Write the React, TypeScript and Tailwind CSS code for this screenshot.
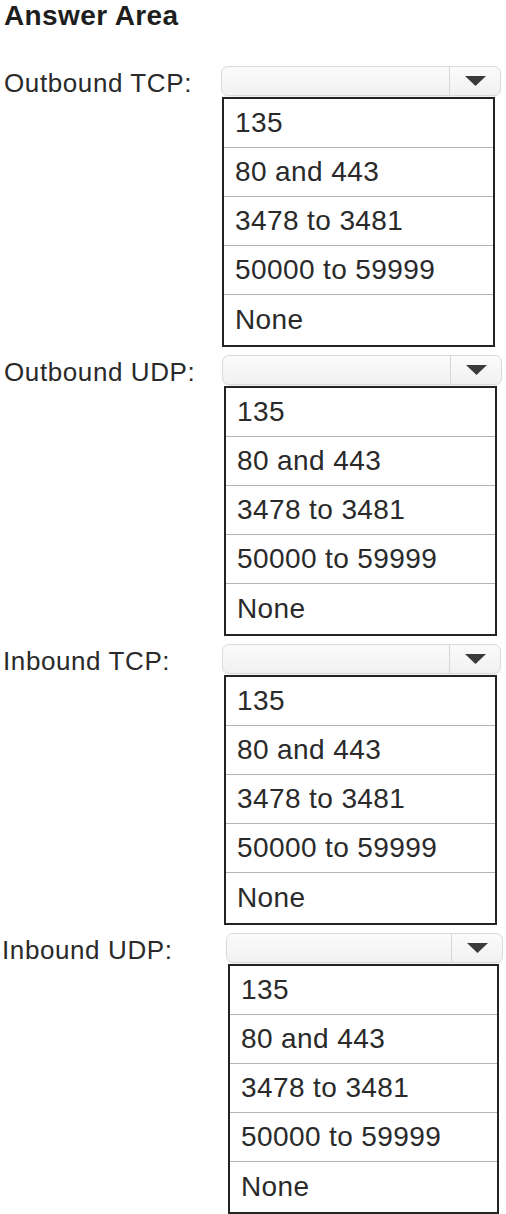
import React from "react";

const OPTIONS = ["135", "80 and 443", "3478 to 3481", "50000 to 59999", "None"];

type Sec = {
  label: string;
  labelPad: string;
  colPad: string;
  selectW: string;
  listPad: string;
  listW: string;
  listMt: string;
  mb: string;
};

const SECTIONS: Sec[] = [
  { label: "Outbound TCP:", labelPad: "pl-[4px]", colPad: "w-[221px]", selectW: "w-[280px]", listPad: "ml-[1px]", listW: "w-[273px]", listMt: "mt-[1px]", mb: "mb-[8px]" },
  { label: "Outbound UDP:", labelPad: "pl-[4px]", colPad: "w-[222px]", selectW: "w-[280px]", listPad: "ml-[2px]", listW: "w-[273px]", listMt: "mt-[1px]", mb: "mb-[8px]" },
  { label: "Inbound TCP:", labelPad: "pl-[3px]", colPad: "w-[222px]", selectW: "w-[279px]", listPad: "ml-[2px]", listW: "w-[273px]", listMt: "mt-[1px]", mb: "mb-[8px]" },
  { label: "Inbound UDP:", labelPad: "pl-[2px]", colPad: "w-[226px]", selectW: "w-[277px]", listPad: "ml-[2px]", listW: "w-[271px]", listMt: "mt-[1px]", mb: "mb-0" },
];

function SelectBox({ w }: { w: string }) {
  return (
    <div
      className={`${w} h-[30px] flex rounded-[7px] border border-[#dadada] bg-gradient-to-b from-[#fbfbfb] to-[#f1f1f1] shadow-[0_1px_1px_rgba(0,0,0,0.06)]`}
    >
      <div className="flex-1" />
      <div className="w-[51px] border-l border-[#d6d6d6] flex items-center justify-center">
        <svg width="21" height="10" viewBox="0 0 21 10">
          <polygon points="0,0 21,0 10.5,10" fill="#3a3a3a" />
        </svg>
      </div>
    </div>
  );
}

function ListBox({ w, pad, mt }: { w: string; pad: string; mt: string }) {
  return (
    <div className={`${w} ${pad} ${mt} border-2 border-[#232323] bg-white`}>
      {OPTIONS.map((o, i) => (
        <div
          key={o}
          className={`${i < 4 ? "h-[49px] border-b border-[#b4b4b4]" : "h-[50px]"} flex items-center pl-[11px] text-[28px] leading-none text-[#2a2a2a] tracking-[0.4px]`}
        >
          {o}
        </div>
      ))}
    </div>
  );
}

export default function App() {
  return (
    <div className="w-[506px] h-[1214px] bg-white overflow-hidden font-['Liberation_Sans'] text-[#222]">
      <div className="h-[66px] pl-[4px]">
        <div className="font-bold text-[28px] leading-[32px] text-[#1e1e1e] tracking-[0.4px]">Answer Area</div>
      </div>
      {SECTIONS.map((s) => (
        <div key={s.label} className={`flex ${s.mb}`}>
          <div className={`${s.colPad} shrink-0 h-[34px] flex items-center ${s.labelPad}`}>
            <span className="text-[26px] leading-[30px] text-[#2a2a2a] tracking-[0.6px]">{s.label}</span>
          </div>
          <div className="flex flex-col">
            <SelectBox w={s.selectW} />
            <ListBox w={s.listW} pad={s.listPad} mt={s.listMt} />
          </div>
        </div>
      ))}
    </div>
  );
}
